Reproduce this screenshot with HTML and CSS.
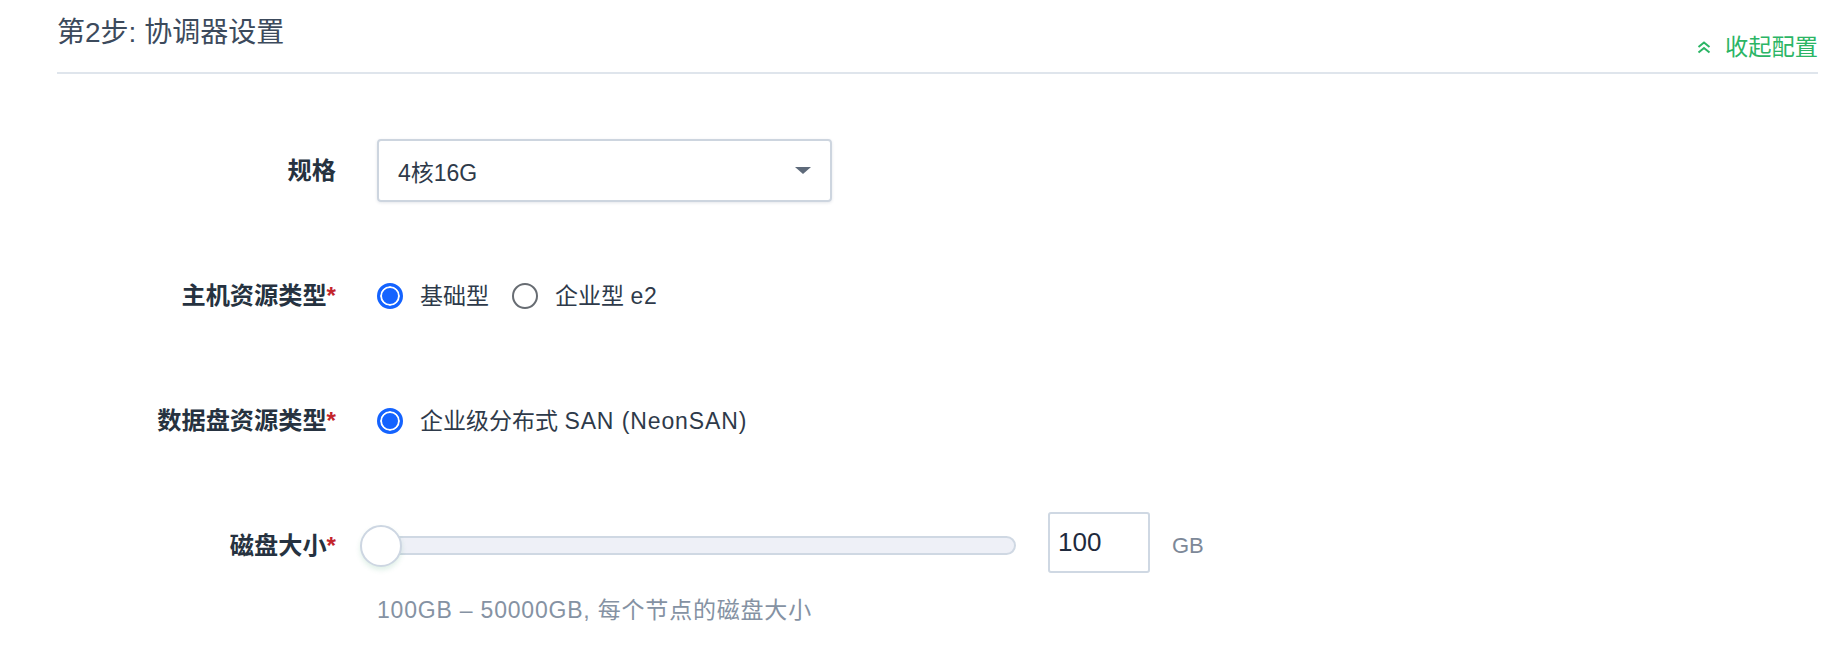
FILE: index.html
```html
<!DOCTYPE html>
<html lang="zh-CN">
<head>
<meta charset="utf-8">
<title>协调器设置</title>
<link rel="stylesheet" href="styles.css">
</head>
<body>
<div class="page">
  <div class="header">
    <h2 class="title">第2步: 协调器设置</h2>
    <a class="collapse">
      <svg class="chev" width="14" height="13" viewBox="0 0 14 13"><polyline points="1.5,6 7,1.5 12.5,6" fill="none" stroke="currentColor" stroke-width="2"/><polyline points="1.5,11.5 7,7 12.5,11.5" fill="none" stroke="currentColor" stroke-width="2"/></svg>
      <span>收起配置</span>
    </a>
  </div>
  <div class="form">
    <div class="row">
      <div class="label">规格</div>
      <div class="control">
        <div class="select"><span>4核16G</span><span class="caret"></span></div>
      </div>
    </div>
    <div class="row">
      <div class="label">主机资源类型<span class="req">*</span></div>
      <div class="control radios">
        <label class="radio"><span class="dot on"></span><span>基础型</span></label>
        <label class="radio"><span class="dot"></span><span>企业型 <span class="latin">e2</span></span></label>
      </div>
    </div>
    <div class="row">
      <div class="label">数据盘资源类型<span class="req">*</span></div>
      <div class="control radios">
        <label class="radio"><span class="dot on"></span><span>企业级分布式 <span class="latin">SAN (NeonSAN)</span></span></label>
      </div>
    </div>
    <div class="row slider-row">
      <div class="label">磁盘大小<span class="req">*</span></div>
      <div class="control size">
        <div class="slider"><span class="thumb"></span></div>
        <div class="num-input">100</div>
        <span class="unit">GB</span>
      </div>
      <div class="hint">100GB – 50000GB, 每个节点的磁盘大小</div>
    </div>
  </div>
</div>
</body>
</html>
```
FILE: styles.css
```css
html, body {
  margin: 0;
  background: #ffffff;
}
body {
  font-family: "Liberation Sans", "Noto Sans CJK SC", sans-serif;
  color: #2e3a4a;
}
.page {
  padding: 0 16px 0 57px;
}
.header {
  display: flex;
  justify-content: space-between;
  height: 72px;
  border-bottom: 2px solid #dfe5ec;
}
.title {
  margin: 13px 0 0;
  font-size: 28px;
  line-height: 40px;
  font-weight: normal;
  color: #3c4a5c;
}
.collapse {
  align-self: flex-end;
  margin-bottom: 10px;
  display: flex;
  align-items: center;
  gap: 14px;
  font-size: 23.25px;
  line-height: 30px;
  color: #2bb565;
  cursor: pointer;
}
.chev {
  display: block;
}
.form {
  padding-top: 65px;
  display: flex;
  flex-direction: column;
  gap: 62px;
}
.row {
  display: grid;
  grid-template-columns: 279px 1fr;
  column-gap: 41px;
  align-items: center;
  min-height: 63px;
}
.label {
  text-align: right;
  font-weight: bold;
  font-size: 24.2px;
  line-height: 30px;
  color: #263240;
}
.req {
  color: #c3242c;
}
.control {
  display: flex;
  align-items: center;
  min-height: 63px;
}
.select {
  width: 455px;
  height: 63px;
  box-sizing: border-box;
  border: 2px solid #cdd5df;
  border-radius: 4px;
  display: flex;
  align-items: center;
  justify-content: space-between;
  padding: 0 19px 0 19px;
  font-size: 23px;
  color: #2e3a4a;
  box-shadow: 0 1px 3px rgba(40, 60, 90, 0.12);
}
.caret {
  width: 0;
  height: 0;
  border-left: 8px solid transparent;
  border-right: 8px solid transparent;
  border-top: 7px solid #5e6a7a;
}
.radios {
  gap: 23px;
}
.radio {
  display: flex;
  align-items: center;
  gap: 17px;
  font-size: 23px;
  line-height: 30px;
  color: #2e3a4a;
}
.latin {
  letter-spacing: 0.9px;
}
.dot {
  width: 26px;
  height: 26px;
  box-sizing: border-box;
  border-radius: 50%;
  border: 2px solid #676c72;
  background: #ffffff;
}
.dot.on {
  border: 3px solid #1463ff;
  background: #1463ff;
  box-shadow: inset 0 0 0 2px #ffffff;
}
.slider-row {
  row-gap: 18px;
}
.slider {
  position: relative;
  width: 639px;
  height: 19px;
  box-sizing: border-box;
  border: 2px solid #cfd8e3;
  border-radius: 10px;
  background: #eef0f7;
}
.thumb {
  position: absolute;
  left: -19px;
  top: 50%;
  width: 42px;
  height: 42px;
  margin-top: -21px;
  box-sizing: border-box;
  border-radius: 50%;
  background: #ffffff;
  border: 2px solid #cdd6e2;
  box-shadow: 0 3px 5px rgba(60, 160, 110, 0.16);
}
.num-input {
  margin-left: 32px;
  margin-top: -7px;
  width: 102px;
  height: 61px;
  box-sizing: border-box;
  border: 2px solid #cfd8e3;
  border-radius: 3px;
  padding-left: 8px;
  display: flex;
  align-items: center;
  font-size: 26px;
  color: #1f2a3d;
}
.unit {
  margin-left: 22px;
  font-size: 22px;
  color: #7d8898;
}
.hint {
  grid-column: 2;
  font-size: 23px;
  letter-spacing: 0.8px;
  line-height: 30px;
  color: #8592a3;
}
```
